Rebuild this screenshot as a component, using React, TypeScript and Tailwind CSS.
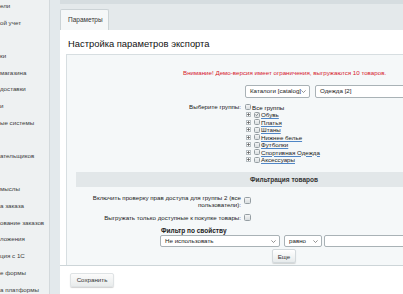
import React from "react";

const sidebarItems = [
  "ели",
  "ой учет",
  "",
  "ки",
  "магазина",
  "доставки",
  "и",
  "ые системы",
  "",
  "ательщиков",
  "",
  "мыслы",
  "а заказа",
  "ование заказов",
  "ложения",
  "ция с 1С",
  "е формы",
  "а платформы",
];

const groups = [
  { name: "Обувь", checked: true },
  { name: "Платья", checked: false },
  { name: "Штаны", checked: false },
  { name: "Нижнее белье", checked: false },
  { name: "Футболки", checked: false },
  { name: "Спортивная Одежда", checked: false },
  { name: "Аксессуары", checked: false },
];

function Chevron() {
  return (
    <svg width="5" height="3" viewBox="0 0 5 3" className="shrink-0">
      <path d="M0.4 0.4 L2.5 2.5 L4.6 0.4" fill="none" stroke="#666" strokeWidth="0.7" />
    </svg>
  );
}

function Select({ label, className }: { label: string; className: string }) {
  return (
    <div
      className={
        "flex items-center justify-between bg-white border border-[#a9b2b6] rounded-[2px] pl-[4px] pr-[3px] text-[6.2px] leading-none text-[#222] " +
        className
      }
    >
      <span className="whitespace-nowrap">{label}</span>
      <Chevron />
    </div>
  );
}

function Checkbox({ checked, small }: { checked?: boolean; small?: boolean }) {
  return (
    <div
      className={
        "shrink-0 flex items-center justify-center border border-[#959ea3] rounded-[1.5px] bg-gradient-to-b from-[#f3f4f5] to-[#d9dee0] " +
        (small ? "w-[6px] h-[6px]" : "w-[7px] h-[7px]")
      }
    >
      {checked && (
        <svg width="5" height="5" viewBox="0 0 5 5">
          <path d="M0.6 2.6 L1.9 3.9 L4.4 0.9" fill="none" stroke="#4a5358" strokeWidth="0.8" />
        </svg>
      )}
    </div>
  );
}

function PlusBox() {
  return (
    <div className="shrink-0 w-[5px] h-[5px] border border-[#b7bfc3] bg-white flex items-center justify-center">
      <svg width="3" height="3" viewBox="0 0 3 3">
        <path d="M0 1.5 H3 M1.5 0 V3" stroke="#555" strokeWidth="0.7" />
      </svg>
    </div>
  );
}

export default function App() {
  return (
    <div className="w-[403px] h-[294px] overflow-hidden flex bg-white text-[#222] font-['Liberation_Sans',Arial,sans-serif]">
      {/* Sidebar */}
      <div className="w-[50px] shrink-0 bg-[#eef1f2] border-r border-[#d3d9dc] overflow-hidden">
        <div className="-mt-[2.4px]">
          {sidebarItems.map((t, i) => (
            <div
              key={i}
              className="h-[16.7px] flex items-center text-[6.2px] leading-none text-[#3b3b3b] whitespace-nowrap"
            >
              {t}
            </div>
          ))}
        </div>
      </div>
      {/* gutter */}
      <div className="w-[10px] shrink-0 bg-[#e3e9ec]" />
      {/* Main */}
      <div className="flex-1 flex flex-col min-w-0">
        <div className="h-[4px] bg-[#d6dde0]" />
        <div className="h-[26px] bg-[#e4e9eb] flex items-end">
          <div className="w-[49px] h-[21px] bg-[#f5f7f8] border border-b-0 border-[#ccd3d6] rounded-t-[2px] flex items-center pl-[7px] text-[6.5px] leading-none text-[#333]">
            Параметры
          </div>
        </div>
        <div className="h-[236px] bg-white flex flex-col border-b border-[#cdd5d8]">
          <div className="h-[24px] pl-[8px] pt-[8px] text-[9.4px] leading-[11px] text-[#111] whitespace-nowrap">
            Настройка параметров экспорта
          </div>
          <div className="flex-1 ml-[6px] border-l border-t border-[#d7dee1] bg-[#f5f8f9] flex flex-col text-[6.2px] leading-[7px] whitespace-nowrap">
            {/* warning */}
            <div className="h-[30px] pt-[13.5px] pl-[116px] text-[#d6202c]">
              Внимание! Демо-версия имеет ограничения, выгружаются 10 товаров.
            </div>
            {/* catalog selects */}
            <div className="h-[14px] flex items-start pl-[178px] gap-[5px]">
              <Select label="Каталоги [catalog]" className="w-[69px] h-[13px]" />
              <Select label="Одежда [2]" className="w-[110px] h-[13px] shrink-0" />
            </div>
            {/* groups */}
            <div className="mt-[4.25px] flex">
              <div className="w-[174px] text-right h-[7.5px] leading-[7.5px]">Выберите группы:</div>
              <div className="ml-[4px] flex flex-col">
                <div className="h-[7.5px] flex items-center gap-[1px]">
                  <Checkbox small />
                  <span className="text-[#111]">Все группы</span>
                </div>
                {groups.map((g) => (
                  <div key={g.name} className="h-[7.5px] flex items-center">
                    <div className="ml-[0.5px]">
                      <PlusBox />
                    </div>
                    <div className="ml-[3.5px]">
                      <Checkbox small checked={g.checked} />
                    </div>
                    <span className="ml-[1px] text-[#1a1a1a] underline decoration-[#4f86c6] underline-offset-[0.5px]">
                      {g.name}
                    </span>
                  </div>
                ))}
              </div>
            </div>
            {/* filter header */}
            <div className="mt-[8.75px] ml-[9px] w-[416px] h-[15px] shrink-0 bg-[#e2e7e9] flex items-center justify-center font-bold text-[#333] text-[6.5px]">
              Фильтрация товаров
            </div>
            {/* checkbox row 1 */}
            <div className="mt-[6.5px] flex items-center">
              <div className="w-[174px] text-right">
                Включить проверку прав доступа для группы 2 (все
                <br />
                пользователи):
              </div>
              <div className="ml-[3px]">
                <Checkbox />
              </div>
            </div>
            {/* checkbox row 2 */}
            <div className="mt-[6px] flex items-center h-[7px]">
              <div className="w-[174px] text-right">Выгружать только доступные к покупке товары:</div>
              <div className="ml-[3px]">
                <Checkbox />
              </div>
            </div>
            {/* filter label */}
            <div className="mt-[6px] pl-[94px] font-bold text-[#222] text-[6.5px]">Фильтр по свойству</div>
            <div className="mt-[1.5px] pl-[93px] flex items-center">
              <Select label="Не использовать" className="w-[120px] h-[12px] shrink-0" />
              <Select label="равно" className="ml-[4px] w-[38px] h-[12px] shrink-0" />
              <div className="ml-[2px] w-[100px] h-[12px] shrink-0 bg-white border border-[#a9b2b6] rounded-[2px]" />
            </div>
            <div className="mt-[2px] pl-[205px]">
              <div className="w-[24px] h-[14px] flex items-center justify-center rounded-[2px] border border-[#d3d9dc] bg-gradient-to-b from-[#ffffff] to-[#e7ebec] shadow-[0_1px_1px_rgba(0,0,0,0.15)] text-[6.2px] text-[#333]">
                Еще
              </div>
            </div>
          </div>
        </div>
        {/* footer */}
        <div className="flex-1 bg-white pl-[10px] pt-[7px]">
          <div className="w-[44px] h-[14px] flex items-center justify-center rounded-[2px] border border-[#dfe3e5] bg-gradient-to-b from-[#fbfbfb] to-[#e9ecec] shadow-[0_1px_1px_rgba(0,0,0,0.18)] text-[6.2px] text-[#333]">
            Сохранить
          </div>
        </div>
      </div>
    </div>
  );
}
